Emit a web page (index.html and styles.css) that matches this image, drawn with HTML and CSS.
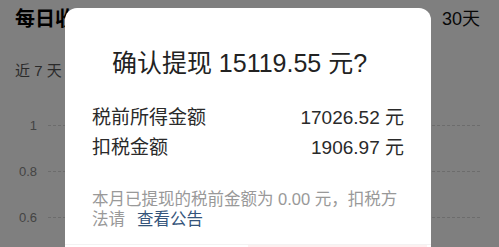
FILE: index.html
```html
<!DOCTYPE html>
<html lang="zh-CN">
<head>
<meta charset="utf-8">
<link rel="stylesheet" href="styles.css">
</head>
<body>
<div class="page">
  <div class="header">
    <span class="h-title">每日收益</span>
    <span class="h-range">30天</span>
  </div>
  <div class="sub">近 7 天</div>
  <div class="chart">
    <div class="grid-row"><span class="ylabel">1</span><span class="gline"></span></div>
    <div class="grid-row"><span class="ylabel">0.8</span><span class="gline"></span></div>
    <div class="grid-row"><span class="ylabel">0.6</span><span class="gline"></span></div>
  </div>
</div>
<div class="mask"></div>
<div class="dialog">
  <div class="d-title">确认提现 15119.55 元?</div>
  <div class="rows">
    <div class="row"><span>税前所得金额</span><span>17026.52 元</span></div>
    <div class="row"><span>扣税金额</span><span>1906.97 元</span></div>
  </div>
  <div class="note">本月已提现的税前金额为 0.00 元，扣税方法请<span class="link">查看公告</span></div>
  <div class="footer">
    <div class="btn btn-cancel"></div>
    <div class="btn btn-ok"></div>
  </div>
</div>
</body>
</html>
```
FILE: styles.css
```css
html, body {
  margin: 0;
  padding: 0;
  background: #fff;
  overflow: hidden;
}
body {
  width: 499px;
  height: 247px;
  font-family: "Liberation Sans", "Noto Sans CJK SC", sans-serif;
  color: #111;
}
.page {
  display: flex;
  flex-direction: column;
}
.header {
  display: flex;
  justify-content: space-between;
  align-items: center;
  padding: 8px 19px 0 15px;
  height: 22px;
}
.h-title {
  font-size: 20px;
  font-weight: 600;
  line-height: 22px;
  color: #000;
}
.h-range {
  font-size: 18px;
  line-height: 22px;
  color: #111;
}
.sub {
  margin: 31px 0 0 15px;
  font-size: 15px;
  line-height: 20px;
  color: #555;
}
.chart {
  margin-top: 21px;
  display: flex;
  flex-direction: column;
}
.grid-row {
  display: flex;
  align-items: center;
  height: 46px;
}
.ylabel {
  width: 37px;
  text-align: right;
  font-size: 13px;
  color: #888;
}
.gline {
  margin-left: 11px;
  width: 432px;
  border-top: 1px dashed #d8d8d8;
}
.mask {
  position: absolute;
  inset: 0;
  background: rgba(0, 0, 0, 0.5);
}
.dialog {
  position: absolute;
  left: 65px;
  top: 8px;
  width: 366px;
  height: 280px;
  box-sizing: border-box;
  background: #fff;
  border-radius: 12px;
  padding: 38px 27px 0 27px;
  display: flex;
  flex-direction: column;
}
.d-title {
  text-align: center;
  font-size: 25px;
  line-height: 35px;
  color: #222;
  padding-right: 17px;
}
.rows {
  margin-top: 22px;
  display: flex;
  flex-direction: column;
}
.row {
  display: flex;
  justify-content: space-between;
  font-size: 19px;
  line-height: 30px;
  color: #2a2a2a;
}
.note {
  margin-top: 26px;
  font-size: 16.5px;
  line-height: 20px;
  color: #999;
}
.link {
  margin-left: 12px;
  color: #34547a;
}
.footer {
  margin: 15px -27px 0 -27px;
  border-top: 1px solid #f2f2f2;
  display: flex;
  height: 50px;
}
.btn {
  flex: 1;
}
.btn-ok {
  margin: 0 4px 0 4px;
  background: #fdf0f0;
}
```
